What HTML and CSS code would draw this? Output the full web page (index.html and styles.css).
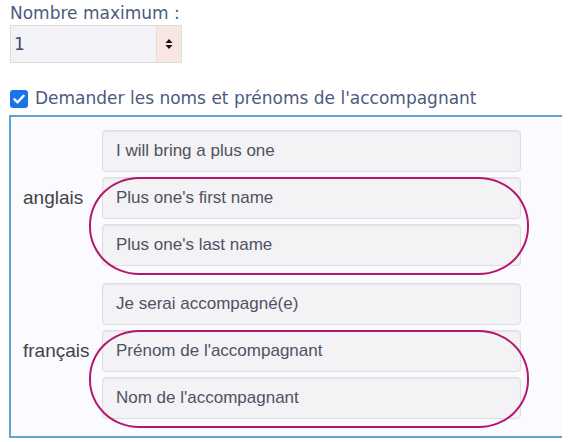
FILE: index.html
```html
<!DOCTYPE html>
<html lang="fr">
<head>
<meta charset="utf-8">
<link rel="stylesheet" href="styles.css">
</head>
<body>
<div class="page">
  <div class="field-label">Nombre maximum :</div>
  <div class="number">
    <span class="number-value">1</span>
    <span class="spinner">
      <svg width="8" height="12" viewBox="0 0 8 12"><path d="M4 1 L7.5 5 H0.5 Z M4 11 L0.5 7 H7.5 Z" fill="#111"/></svg>
    </span>
  </div>
  <label class="check-row">
    <span class="checkbox">
      <svg width="18" height="18" viewBox="0 0 18 18"><path d="M4.5 9.3 L7.6 12.3 L13.6 5.8" fill="none" stroke="#fff" stroke-width="2.4" stroke-linecap="round" stroke-linejoin="round"/></svg>
    </span>
    <span class="check-text">Demander les noms et prénoms de l'accompagnant</span>
  </label>
  <div class="box">
    <div class="lang">
      <div class="lang-name">anglais</div>
      <div class="inputs">
        <div class="input">I will bring a plus one</div>
        <div class="pair">
          <div class="input">Plus one's first name</div>
          <div class="input">Plus one's last name</div>
          <span class="ring"></span>
        </div>
      </div>
    </div>
    <div class="lang">
      <div class="lang-name">français</div>
      <div class="inputs">
        <div class="input">Je serai accompagné(e)</div>
        <div class="pair">
          <div class="input">Prénom de l'accompagnant</div>
          <div class="input">Nom de l'accompagnant</div>
          <span class="ring"></span>
        </div>
      </div>
    </div>
  </div>
</div>
</body>
</html>
```
FILE: styles.css
```css
html, body {
  margin: 0;
  padding: 0;
  background: #ffffff;
}
.page {
  padding: 3px 0 0 10px;
  font-family: "DejaVu Sans", Verdana, sans-serif;
}
.field-label {
  font-size: 17px;
  line-height: 21px;
  color: #4d5a80;
}
.number {
  display: flex;
  width: 172px;
  height: 38px;
  margin-top: 1px;
  box-sizing: border-box;
  border: 1px solid #dcdcdc;
  background: #f3f2f6;
}
.number-value {
  flex: 1;
  padding-left: 3px;
  font-size: 17px;
  line-height: 36px;
  color: #3d4a70;
}
.spinner {
  width: 24px;
  background: #f7e6e1;
  border-left: 1px solid #e6dada;
  display: flex;
  align-items: center;
  justify-content: center;
}
.check-row {
  display: flex;
  align-items: center;
  gap: 7px;
  margin-top: 25px;
}
.checkbox {
  width: 18px;
  height: 18px;
  border-radius: 3px;
  background: #1a73e8;
  display: flex;
}
.check-text {
  font-size: 17px;
  line-height: 21px;
  color: #4d5a80;
}
.box {
  margin: 6px 0 0 -1px;
  width: 553px;
  box-sizing: border-box;
  border: 2px solid #5ea6cf;
  border-right: none;
  background: #fbfaff;
  padding: 13px 0 17px 0;
  display: flex;
  flex-direction: column;
  gap: 17px;
}
.lang {
  display: flex;
  align-items: center;
}
.lang-name {
  width: 79px;
  padding-left: 12px;
  font-family: "Liberation Sans", Arial, sans-serif;
  font-size: 19px;
  color: #444444;
  white-space: nowrap;
}
.inputs {
  display: flex;
  flex-direction: column;
  gap: 5px;
  width: 419px;
}
.pair {
  position: relative;
  display: flex;
  flex-direction: column;
  gap: 5px;
}
.input {
  height: 42px;
  box-sizing: border-box;
  border: 1px solid #dedede;
  border-radius: 4px;
  background: #f3f2f5;
  box-shadow: inset 0 1px 2px rgba(0,0,0,0.06);
  padding-left: 13px;
  font-family: "Liberation Sans", Arial, sans-serif;
  font-size: 17px;
  line-height: 40px;
  color: #4e5263;
}
.ring {
  position: absolute;
  top: 0;
  left: -13px;
  right: -8px;
  bottom: -9px;
  border: 2.5px solid #b3186f;
  border-radius: 50px / 48px;
  pointer-events: none;
}
```
